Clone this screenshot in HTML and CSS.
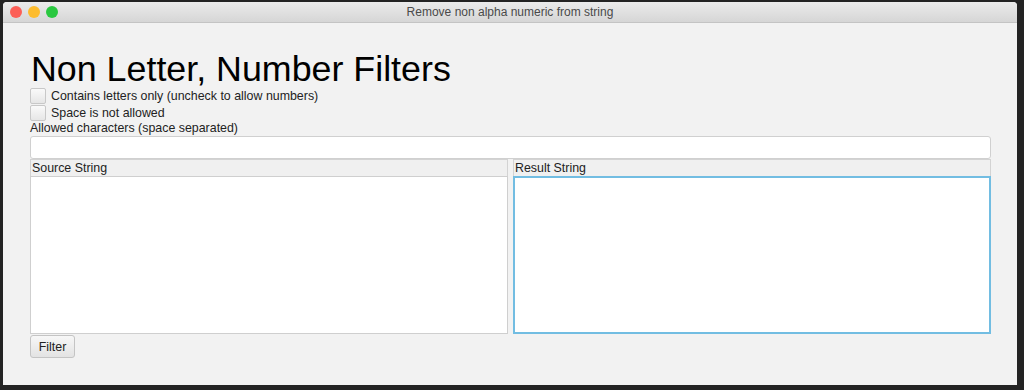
FILE: index.html
```html
<html>
<head>
  <title>Remove non alpha numeric from string</title>
  <link rel="stylesheet" href="styles.css">
</head>
<body>

<div class="window">
  <div class="titlebar">
    <div class="lights">
      <span class="light red"></span>
      <span class="light yellow"></span>
      <span class="light green"></span>
    </div>
    <div class="title">Remove non alpha numeric from string</div>
  </div>

  <div class="content">
    <h1>Non Letter, Number Filters</h1>

    <label class="check"><span class="box"></span>Contains letters only (uncheck to allow numbers)</label>
    <label class="check"><span class="box"></span>Space is not allowed</label>

    <div class="field-label">Allowed characters (space separated)</div>
    <input type="text" class="text-field">

    <div class="panes">
      <div class="pane">
        <div class="pane-head">Source String</div>
        <textarea class="area"></textarea>
      </div>
      <div class="pane">
        <div class="pane-head">Result String</div>
        <textarea class="area focused"></textarea>
      </div>
    </div>

    <button class="filter-btn">Filter</button>
  </div>
</div>

</body>
</html>
```

FILE: styles.css
```css
body {
  margin: 0;
  background: #232323;
  font-family: "Liberation Sans", Arial, sans-serif;
  overflow: hidden;
}
.window {
  margin: 2px 0 0 3px;
  width: 1014px;
  height: 383px;
  background: #f2f2f2;
  border-radius: 4px 4px 0 0;
  display: flex;
  flex-direction: column;
  overflow: hidden;
}
.titlebar {
  height: 20px;
  background: linear-gradient(#ebebeb, #d6d6d6);
  border-bottom: 1px solid #c4c4c4;
  display: flex;
  align-items: center;
  position: relative;
}
.lights {
  display: flex;
  gap: 6px;
  padding-left: 7px;
}
.light {
  width: 12px;
  height: 12px;
  border-radius: 50%;
}
.red { background: #fc5f57; }
.yellow { background: #fdbc2e; }
.green { background: #2ac840; }
.title {
  position: absolute;
  left: 0;
  right: 0;
  text-align: center;
  font-size: 12px;
  color: #4a4a4a;
}
.content {
  padding: 29px 26px 0 27px;
  display: flex;
  flex-direction: column;
  align-items: flex-start;
}
h1 {
  margin: 0 0 0 1px;
  font-size: 35.8px;
  font-weight: normal;
  line-height: 35px;
  color: #000;
}
.check {
  display: flex;
  align-items: center;
  font-size: 12.4px;
  color: #222;
  height: 17px;
}
.box {
  width: 16px;
  height: 16px;
  margin-right: 5px;
  border: 1px solid #c8c8c8;
  border-radius: 2px;
  background: linear-gradient(#fafafa, #e6e6e6);
  box-sizing: border-box;
}
.field-label {
  font-size: 12.4px;
  color: #222;
  height: 15px;
  line-height: 15px;
}
.text-field {
  width: 961px;
  height: 23px;
  margin: 0;
  border: 1px solid #d0d0d0;
  border-radius: 3px;
  background: #fff;
  box-sizing: border-box;
}
.panes {
  display: flex;
  gap: 5px;
  width: 961px;
}
.pane {
  flex: 1;
  display: flex;
  flex-direction: column;
}
.pane-head {
  height: 17px;
  line-height: 16px;
  font-size: 12.4px;
  color: #222;
  padding-left: 1px;
  border: 1px solid #d3d3d3;
  border-bottom: none;
  background: #f0f0f0;
  box-sizing: border-box;
}
.area {
  height: 158px;
  margin: 0;
  resize: none;
  border: 1px solid #cfcfcf;
  background: #fff;
  box-sizing: border-box;
  outline: none;
}
.area.focused {
  border: 2px solid #72bde2;
}
.filter-btn {
  margin-top: 1px;
  width: 45px;
  height: 23px;
  font-family: "Liberation Sans", Arial, sans-serif;
  font-size: 12.4px;
  color: #222;
  border: 1px solid #c4c4c4;
  border-radius: 3px;
  background: linear-gradient(#f7f7f7, #e3e3e3);
  padding: 0;
}
```
